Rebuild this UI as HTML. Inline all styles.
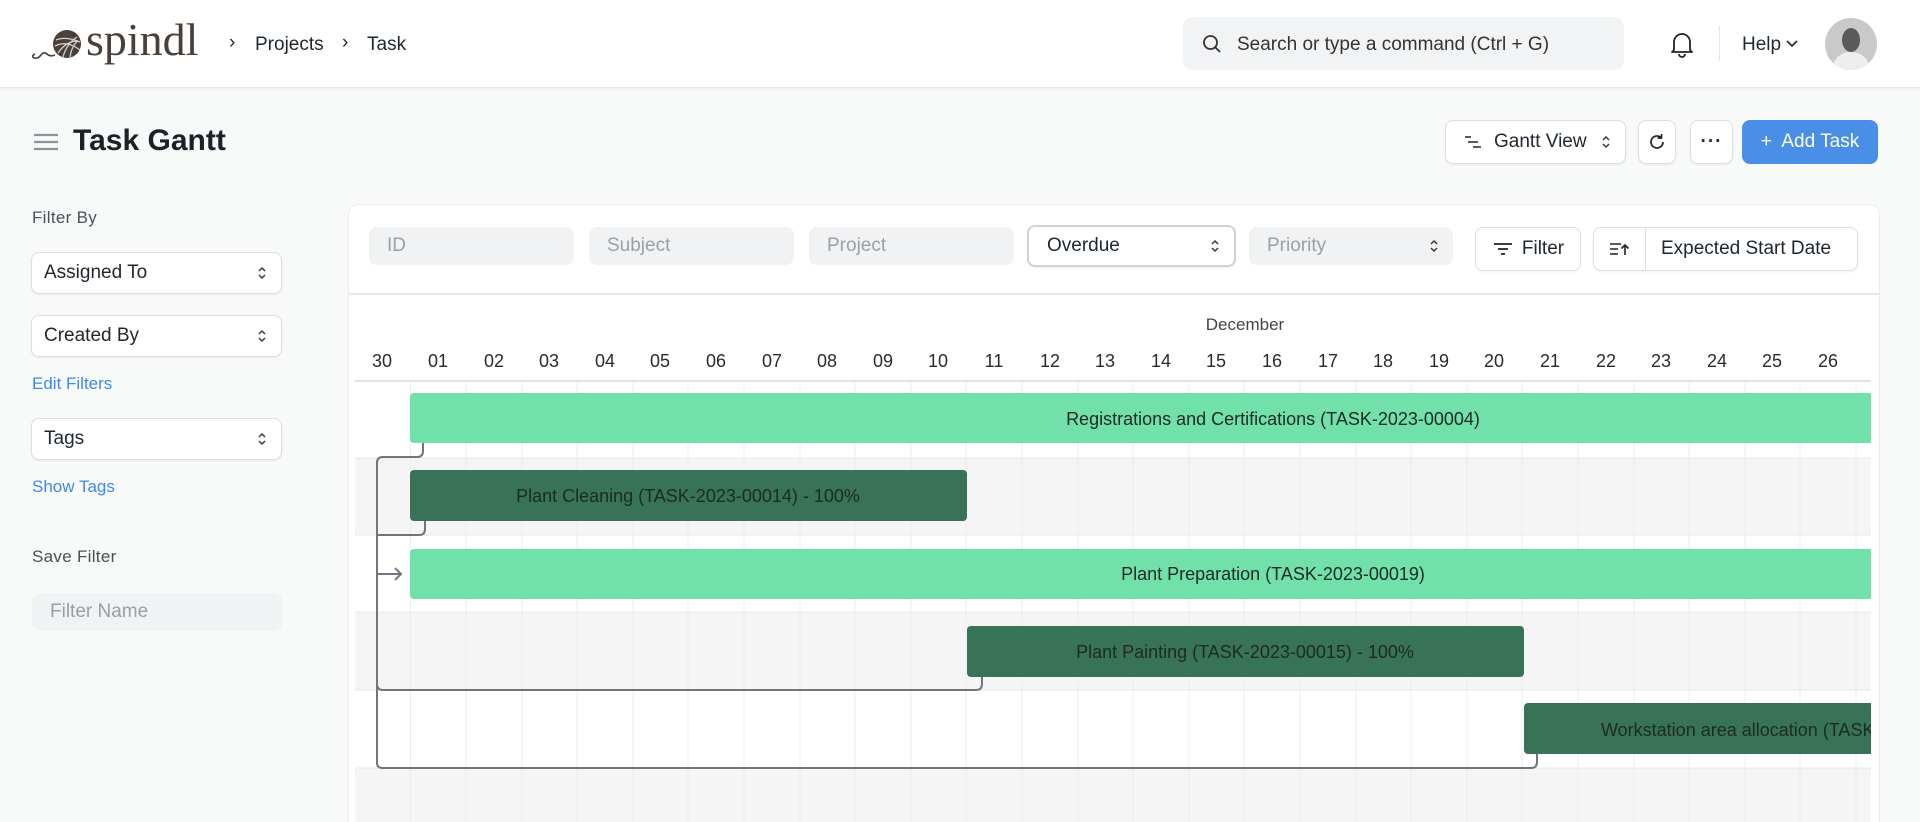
<!DOCTYPE html>
<html style="height:822px;overflow:hidden"><head><meta charset="utf-8">
<style>
*{box-sizing:border-box;margin:0;padding:0}
body{width:1920px;height:822px;overflow:hidden;background:#f8f9f9;font-family:"Liberation Sans",sans-serif;color:#1f272e;position:relative}
.abs{position:absolute}
.hdr{left:0;top:0;width:1920px;height:88px;background:#fff;border-bottom:1px solid #e6e8ea;box-shadow:0 1px 3px rgba(0,0,0,.05)}
.t18{font-size:19px}
.sel{background:#fff;border:1px solid #dcdfe2;border-radius:8px;box-shadow:0 1px 2px rgba(0,0,0,.06);font-size:19px;padding-left:12px;display:flex;align-items:center}
.inp{background:#f1f2f3;border-radius:8px;font-size:19px;color:#999fa6;padding-left:18px;display:flex;align-items:center}
.btn{background:#fff;border:1px solid #dcdfe2;border-radius:8px;box-shadow:0 1px 2px rgba(0,0,0,.06);display:flex;align-items:center;justify-content:center;font-size:19px}
.updn{position:absolute;right:14px;top:50%;transform:translateY(-50%)}
.lbl{font-size:17px;color:#4a5057;letter-spacing:.3px}
.link{font-size:17px;color:#3d8ae8}
</style></head><body>
<div class="abs hdr"></div>
<svg class="abs" style="left:30px;top:22px" width="60" height="44" viewBox="0 0 60 44">
<path d="M5 32 q-4 2 -1 4 q4 1 7 -3 q3 -4 6 -1 q3 3 8 1" fill="none" stroke="#4a403a" stroke-width="1.6"/>
<circle cx="37" cy="22" r="14" fill="#4a403a"/>
<path d="M26 18 q10 -4 24 2 M25 24 q12 -6 25 4 M28 31 q8 -12 20 -12 M33 35 q4 -14 14 -20 M40 35 q2 -12 8 -16" stroke="#d8d2cc" stroke-width="1.3" fill="none"/>
</svg>
<div class="abs" style="left:86px;top:14px;font-family:'Liberation Serif',serif;font-size:46px;color:#4a403a;line-height:52px">spindl</div>
<div class="abs t18" style="left:229px;top:32px">›</div>
<div class="abs t18" style="left:255px;top:34px">Projects</div>
<div class="abs t18" style="left:342px;top:32px">›</div>
<div class="abs t18" style="left:367px;top:34px">Task</div>
<div class="abs" style="left:1183px;top:17px;width:441px;height:53px;background:#f2f3f4;border-radius:10px"></div>
<svg class="abs" style="left:1202px;top:34px" width="20" height="20" viewBox="0 0 20 20"><circle cx="8.5" cy="8.5" r="6.5" fill="none" stroke="#333" stroke-width="1.8"/><path d="M13 13l5 5" stroke="#333" stroke-width="1.8"/></svg>
<div class="abs t18" style="left:1237px;top:34px;color:#333">Search or type a command (Ctrl + G)</div>
<svg class="abs" style="left:1669px;top:30px" width="26" height="28" viewBox="0 0 26 28"><path d="M5 20 V12 a8 8 0 0 1 16 0 V20 l2 2 H3z M10 24 a3 3 0 0 0 6 0" fill="none" stroke="#222" stroke-width="1.8" stroke-linejoin="round"/></svg>
<div class="abs" style="left:1719px;top:26px;width:1px;height:35px;background:#e2e4e6"></div>
<div class="abs t18" style="left:1742px;top:34px">Help</div>
<svg class="abs" style="left:1786px;top:40px" width="12" height="8"><path d="M1 1l5 5 5-5" fill="none" stroke="#222" stroke-width="1.6"/></svg>
<div class="abs" style="left:1825px;top:18px;width:52px;height:52px;border-radius:50%;overflow:hidden;background:#c9c9c9">
<div style="position:absolute;left:17px;top:10px;width:18px;height:24px;border-radius:50%;background:#5a5a5a"></div>
<div style="position:absolute;left:8px;top:34px;width:36px;height:30px;border-radius:50%;background:#eee"></div></div>
<svg class="abs" style="left:34px;top:133px" width="24" height="18"><path d="M0 2h24M0 9h24M0 16h24" stroke="#8b939b" stroke-width="2.2"/></svg>
<div class="abs" style="left:73px;top:124px;font-size:30px;font-weight:bold;color:#1b2127">Task Gantt</div>
<div class="abs btn" style="left:1445px;top:120px;width:181px;height:44px;justify-content:flex-start;padding-left:18px">
<svg width="20" height="14" viewBox="0 0 20 14"><path d="M1 2h6M4 7h10M9 12h8" stroke="#222" stroke-width="1.6"/></svg><span style="margin-left:10px">Gantt View</span>
<svg class="updn" width="10" height="16"><path d="M2 6l3-3 3 3M2 10l3 3 3-3" fill="none" stroke="#333" stroke-width="1.4"/></svg></div>
<div class="abs btn" style="left:1638px;top:120px;width:38px;height:44px"><svg width="20" height="20" viewBox="0 0 20 20"><path d="M16 10a6 6 0 1 1-2-4.5M14.5 2v4h-4" fill="none" stroke="#222" stroke-width="1.7"/></svg></div>
<div class="abs btn" style="left:1690px;top:120px;width:43px;height:44px;font-weight:bold;letter-spacing:1px">···</div>
<div class="abs" style="left:1742px;top:120px;width:136px;height:44px;background:#4a8fe7;border-radius:8px;color:#fff;font-size:19px;display:flex;align-items:center;justify-content:center">+&nbsp; Add Task</div>
<div class="abs lbl" style="left:32px;top:208px">Filter By</div>
<div class="abs sel" style="left:31px;top:252px;width:251px;height:42px">Assigned To<svg class="updn" width="10" height="16"><path d="M2 6l3-3 3 3M2 10l3 3 3-3" fill="none" stroke="#333" stroke-width="1.4"/></svg></div>
<div class="abs sel" style="left:31px;top:315px;width:251px;height:42px">Created By<svg class="updn" width="10" height="16"><path d="M2 6l3-3 3 3M2 10l3 3 3-3" fill="none" stroke="#333" stroke-width="1.4"/></svg></div>
<div class="abs link" style="left:32px;top:374px">Edit Filters</div>
<div class="abs sel" style="left:31px;top:418px;width:251px;height:42px">Tags<svg class="updn" width="10" height="16"><path d="M2 6l3-3 3 3M2 10l3 3 3-3" fill="none" stroke="#333" stroke-width="1.4"/></svg></div>
<div class="abs link" style="left:32px;top:477px">Show Tags</div>
<div class="abs lbl" style="left:32px;top:547px">Save Filter</div>
<div class="abs inp" style="left:32px;top:593px;width:250px;height:38px;padding-left:18px">Filter Name</div>
<div class="abs" style="left:348px;top:204px;width:1532px;height:618px;background:#fff;border:1px solid #ebedef;border-bottom:none;border-radius:10px 10px 0 0"></div>
<div class="abs inp" style="left:369px;top:227px;width:205px;height:38px">ID</div>
<div class="abs inp" style="left:589px;top:227px;width:205px;height:38px">Subject</div>
<div class="abs inp" style="left:809px;top:227px;width:205px;height:38px">Project</div>
<div class="abs sel" style="left:1027px;top:225px;width:209px;height:42px;border:2px solid #cfd3d7;color:#1f272e;padding-left:18px">Overdue<svg class="updn" width="10" height="16"><path d="M2 6l3-3 3 3M2 10l3 3 3-3" fill="none" stroke="#333" stroke-width="1.4"/></svg></div>
<div class="abs inp" style="left:1249px;top:227px;width:204px;height:38px">Priority<svg class="updn" width="10" height="16"><path d="M2 6l3-3 3 3M2 10l3 3 3-3" fill="none" stroke="#333" stroke-width="1.4"/></svg></div>
<div class="abs btn" style="left:1475px;top:227px;width:106px;height:44px"><svg width="22" height="16"><path d="M2 3h18M6 8h10M9 13h4" stroke="#222" stroke-width="1.7"/></svg><span style="margin-left:8px">Filter</span></div>
<div class="abs btn" style="left:1593px;top:227px;width:265px;height:44px;justify-content:flex-start">
<div style="width:52px;height:42px;border-right:1px solid #dcdfe2;display:flex;align-items:center;justify-content:center"><svg width="22" height="16"><path d="M1 3h11M1 8h8M1 13h8M16 14V4M12.5 7.5L16 4l3.5 3.5" fill="none" stroke="#222" stroke-width="1.6"/></svg></div>
<span style="margin-left:15px">Expected Start Date</span></div>
<svg class="abs" style="left:0;top:0" width="1920" height="822" viewBox="0 0 1920 822" font-family="Liberation Sans, sans-serif">
<defs><clipPath id="c"><rect x="355" y="381" width="1516" height="441"/></clipPath></defs>
<line x1="349" y1="294" x2="1879" y2="294" stroke="#e5e7e9" stroke-width="2"/>
<text x="1245" y="330" font-size="17" fill="#444" text-anchor="middle">December</text>
<g font-size="18" fill="#2b2b2b" text-anchor="middle">
<text x="382" y="367">30</text><text x="438" y="367">01</text><text x="494" y="367">02</text><text x="549" y="367">03</text><text x="605" y="367">04</text><text x="660" y="367">05</text><text x="716" y="367">06</text><text x="772" y="367">07</text><text x="827" y="367">08</text><text x="883" y="367">09</text><text x="938" y="367">10</text><text x="994" y="367">11</text><text x="1050" y="367">12</text><text x="1105" y="367">13</text><text x="1161" y="367">14</text><text x="1216" y="367">15</text><text x="1272" y="367">16</text><text x="1328" y="367">17</text><text x="1383" y="367">18</text><text x="1439" y="367">19</text><text x="1494" y="367">20</text><text x="1550" y="367">21</text><text x="1606" y="367">22</text><text x="1661" y="367">23</text><text x="1717" y="367">24</text><text x="1772" y="367">25</text><text x="1828" y="367">26</text>
</g>
<g clip-path="url(#c)">
<rect x="355" y="458" width="1516" height="77" fill="#f5f5f5"/>
<rect x="355" y="612" width="1516" height="78" fill="#f5f5f5"/>
<rect x="355" y="768" width="1516" height="60" fill="#f5f5f5"/>
<g stroke="#ededed" stroke-width="1">
<path d="M410.5 381V822M466 381V822M522 381V822M577 381V822M633 381V822M688 381V822M744 381V822M800 381V822M855 381V822M911 381V822M966 381V822M1022 381V822M1078 381V822M1133 381V822M1189 381V822M1244 381V822M1300 381V822M1356 381V822M1411 381V822M1467 381V822M1522 381V822M1578 381V822M1634 381V822M1689 381V822M1745 381V822M1800 381V822M1856 381V822"/>
<path d="M355 458H1871M355 535H1871M355 612H1871M355 690H1871M355 768H1871" stroke="#e8e8e8"/>
</g>
<g fill="none" stroke="#6f767d" stroke-width="2">
<path d="M423 443v8q0 6-6 6h-34q-6 0-6 6v300q0 5 6 5h1148q6 0 6-6v-8"/>
<path d="M425 521v8q0 6-6 6h-42"/>
<path d="M377 574h24M395 568l6 6-6 6"/>
<path d="M377 684q0 6 6 6h593q6 0 6-6v-7"/>
</g>
<rect x="410" y="393" width="1470" height="50" rx="4" fill="#71e0a9"/>
<rect x="410" y="470" width="557" height="51" rx="4" fill="#387257"/>
<rect x="410" y="549" width="1470" height="50" rx="4" fill="#71e0a9"/>
<rect x="967" y="626" width="557" height="51" rx="4" fill="#387257"/>
<rect x="1524" y="703" width="400" height="51" rx="4" fill="#387257"/>
<g font-size="18" fill="#1c2b24">
<text x="1273" y="425" text-anchor="middle">Registrations and Certifications (TASK-2023-00004)</text>
<text x="688" y="502" text-anchor="middle">Plant Cleaning (TASK-2023-00014) - 100%</text>
<text x="1273" y="580" text-anchor="middle">Plant Preparation (TASK-2023-00019)</text>
<text x="1245" y="658" text-anchor="middle">Plant Painting (TASK-2023-00015) - 100%</text>
<text x="1601" y="736">Workstation area allocation (TASK-2023-00016)</text>
</g>
</g>
<line x1="355" y1="381" x2="1871" y2="381" stroke="#e2e4e6" stroke-width="2"/>
</svg>
</body></html>
